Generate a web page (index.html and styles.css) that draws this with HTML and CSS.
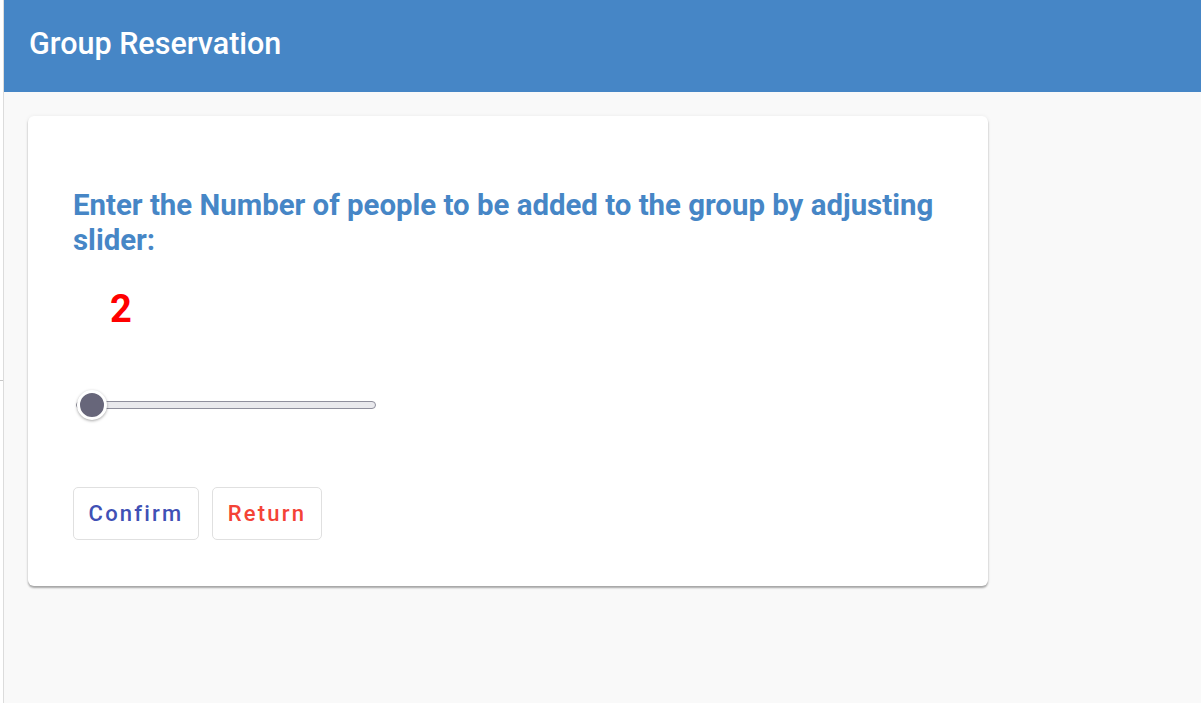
FILE: index.html
```html
<!DOCTYPE html>
<html lang="en">
<head>
<meta charset="utf-8">
<title>Group Reservation</title>
<link rel="stylesheet" href="styles.css">
</head>
<body>
<div class="shell">
  <div class="gutter"><div class="gutter-top"></div></div>
  <div class="app">
    <header class="topbar">
      <h1 class="title">Group Reservation</h1>
    </header>
    <main class="content">
      <section class="card">
        <h2 class="question">Enter the Number of people to be added to the group by adjusting slider:</h2>
        <div class="count">2</div>
        <div class="slider-row">
          <input class="slider" type="range" min="2" max="20" value="2">
        </div>
        <div class="actions">
          <button class="btn btn-confirm" type="button">Confirm</button>
          <button class="btn btn-return" type="button">Return</button>
        </div>
      </section>
    </main>
  </div>
</div>
</body>
</html>
```

FILE: styles.css
```css
html, body {
  margin: 0;
  padding: 0;
  height: 100%;
  background: #ffffff;
  font-family: Roboto, "Liberation Sans", Arial, sans-serif;
}

.shell {
  display: flex;
  height: 703px;
  overflow: hidden;
}

.gutter {
  width: 3px;
  flex: 0 0 3px;
  border-right: 1px solid #dcdcdc;
  background: #ffffff;
}

.gutter-top {
  height: 380px;
  border-bottom: 1px solid #c8c8c8;
}

.app {
  flex: 1;
  display: flex;
  flex-direction: column;
  background: #f9f9f9;
}

.topbar {
  height: 92px;
  flex: 0 0 92px;
  background: #4686c6;
  padding: 26px 0 0 25px;
  box-sizing: border-box;
}

.title {
  margin: 0;
  color: #ffffff;
  font-size: 30.5px;
  font-weight: 500;
  line-height: 36px;
}

.content {
  padding: 24px 0 0 24px;
}

.card {
  width: 960px;
  box-sizing: border-box;
  background: #ffffff;
  border-radius: 6px;
  box-shadow: 0 2px 2px rgba(0, 0, 0, 0.32), 0 0 4px rgba(0, 0, 0, 0.06);
  padding: 72px 45px 46px 45px;
  display: flex;
  flex-direction: column;
}

.question {
  margin: 0;
  color: #4686c6;
  font-size: 29.4px;
  font-weight: 700;
  line-height: 35px;
}

.count {
  margin: 29px 0 0 37px;
  color: #ff0000;
  font-size: 38px;
  font-weight: 700;
  line-height: 44px;
}

.slider-row {
  margin-top: 59px;
  height: 30px;
  display: flex;
  align-items: center;
}

.slider {
  -webkit-appearance: none;
  appearance: none;
  margin: 0 0 0 3px;
  padding: 0;
  width: 300px;
  height: 30px;
  background: transparent;
}

.slider::-webkit-slider-runnable-track {
  height: 8px;
  box-sizing: border-box;
  border: 1px solid #8f8f9d;
  border-radius: 4px;
  background: #e9e9ed;
}

.slider::-webkit-slider-thumb {
  -webkit-appearance: none;
  appearance: none;
  width: 30px;
  height: 30px;
  box-sizing: border-box;
  margin-top: -12px;
  border-radius: 50%;
  border: 3px solid #ffffff;
  background: #67667a;
  box-shadow: 0 1px 3px rgba(0, 0, 0, 0.35);
}

.actions {
  margin-top: 67px;
  display: flex;
  gap: 13px;
}

.btn {
  height: 53px;
  padding: 0 14px 0 14px;
  background: #ffffff;
  border: 1px solid #e0e0e0;
  border-radius: 5px;
  font-family: Roboto, "Liberation Sans", Arial, sans-serif;
  font-size: 22px;
  font-weight: 500;
  letter-spacing: 2.2px;
}

.btn-confirm {
  color: #3f51b5;
  width: 126px;
}

.btn-return {
  color: #f44336;
  width: 110px;
}
```
